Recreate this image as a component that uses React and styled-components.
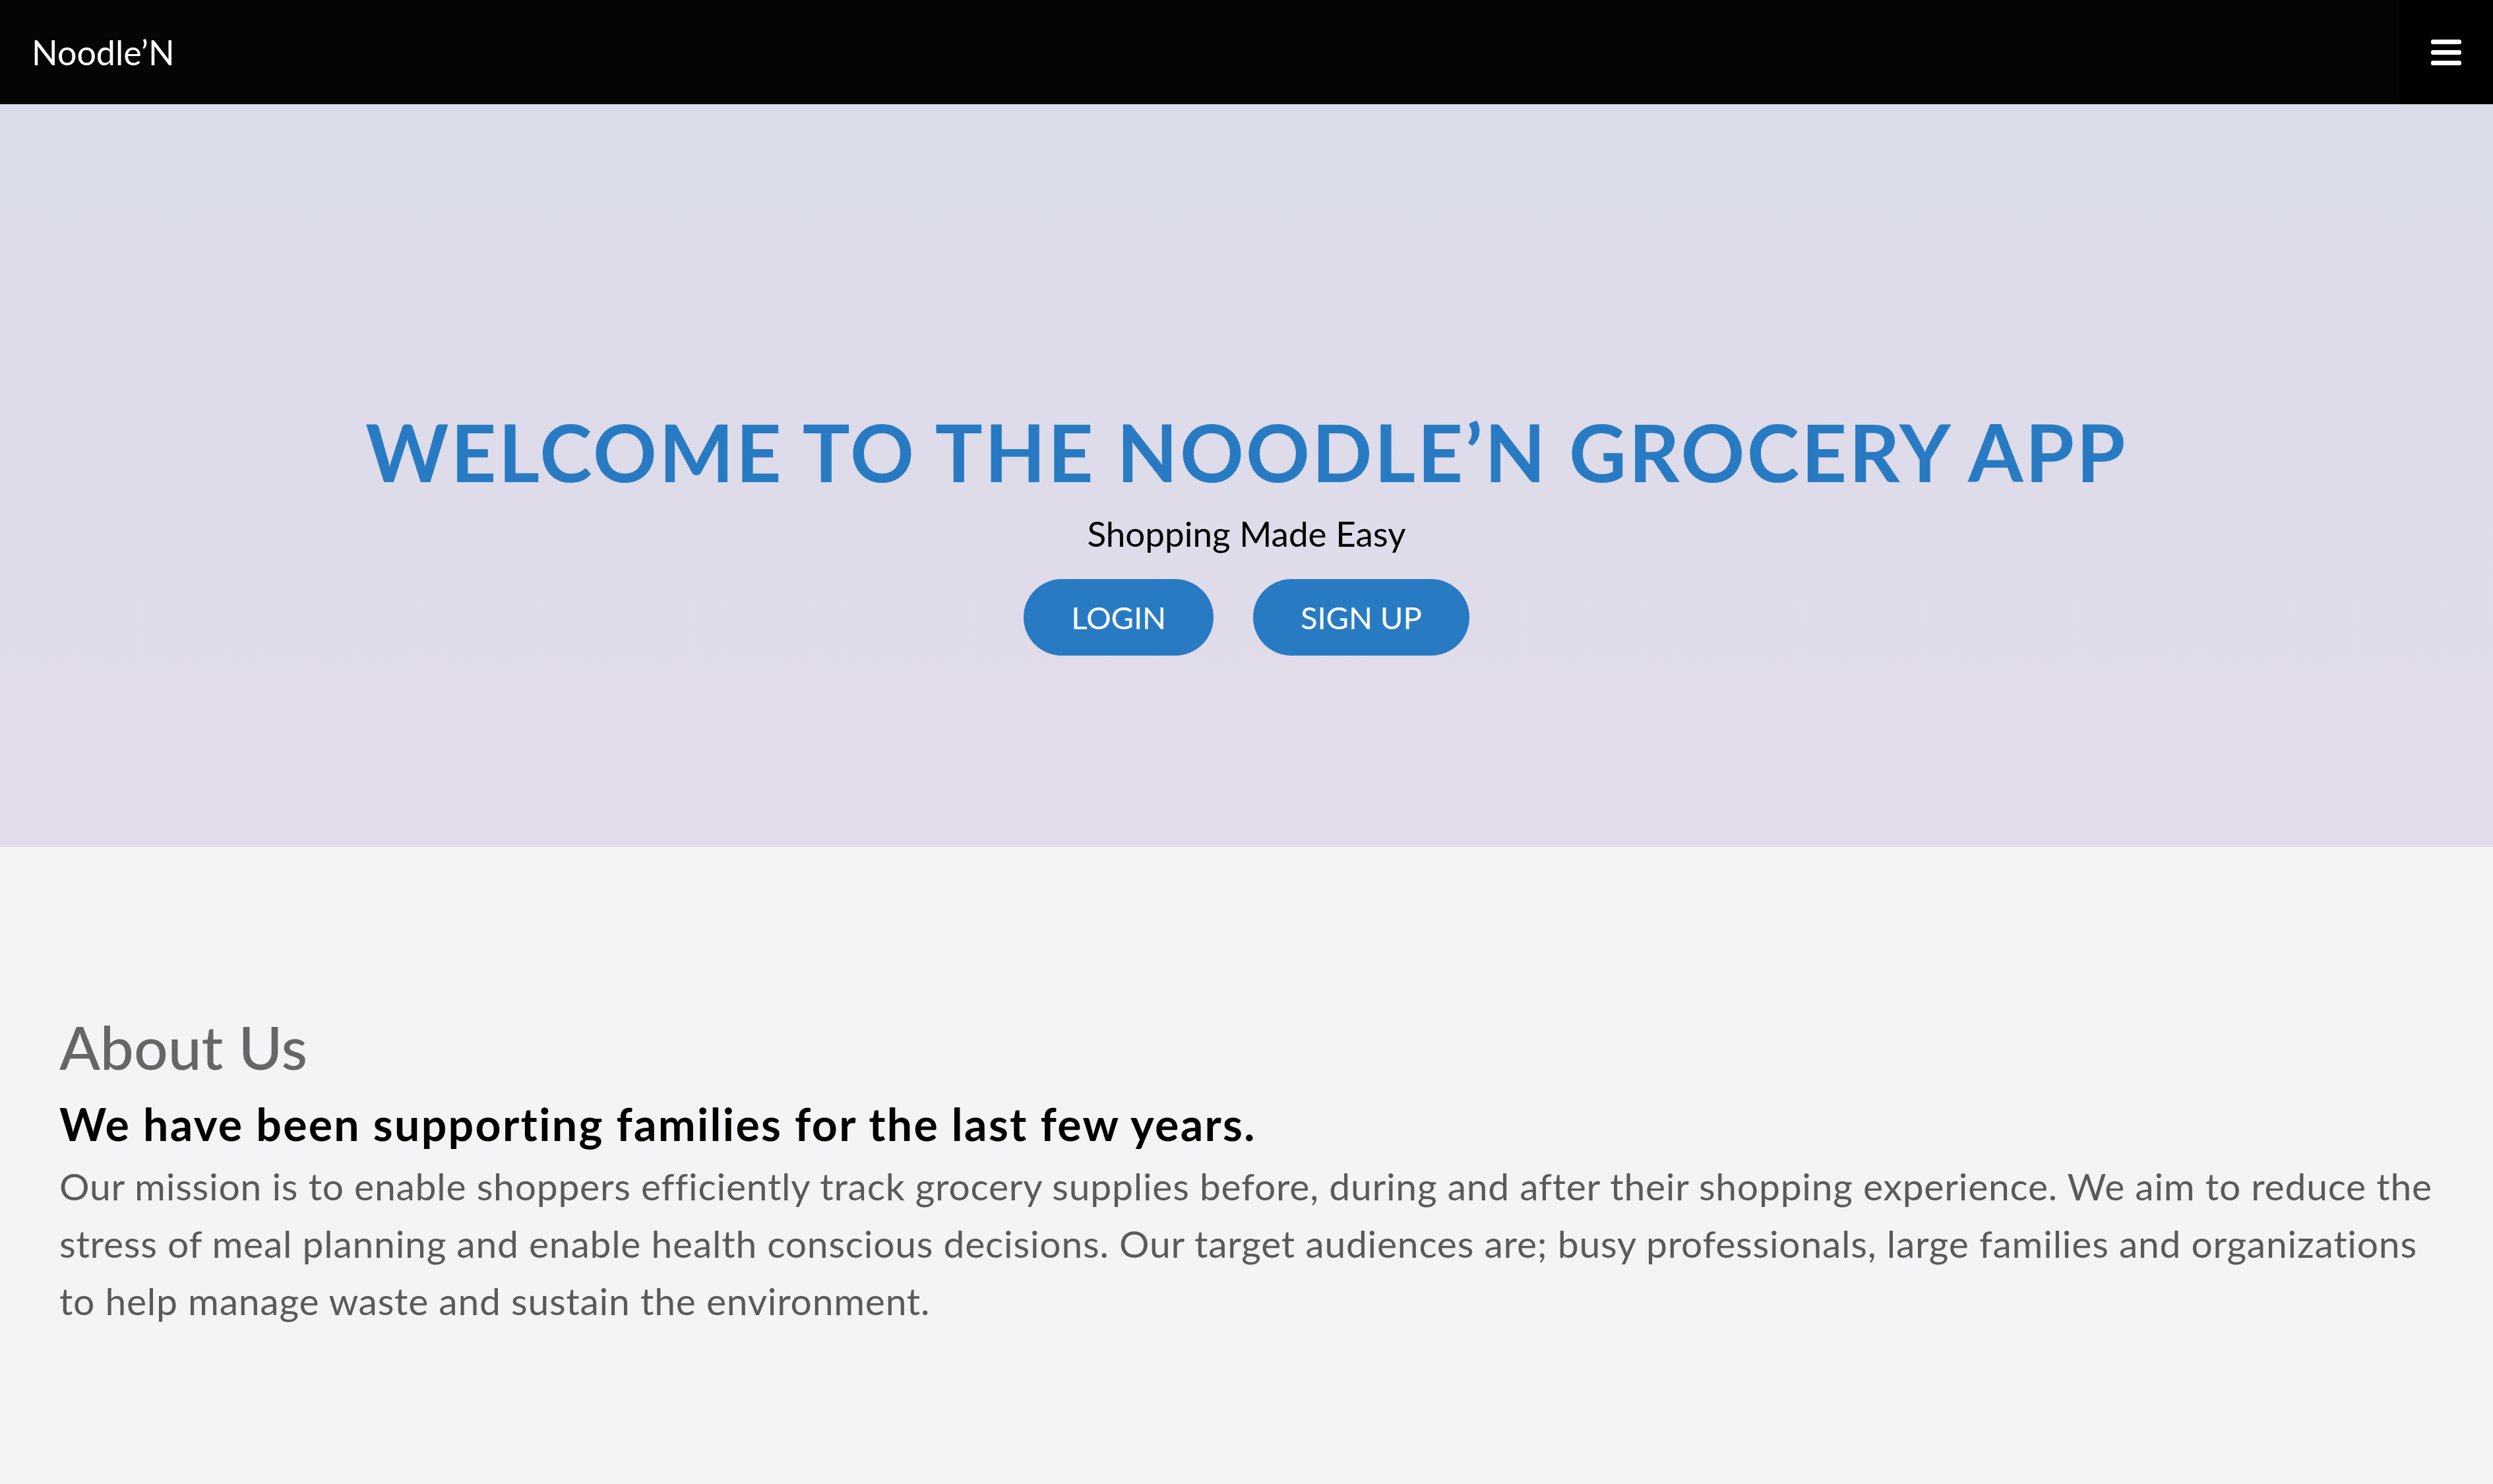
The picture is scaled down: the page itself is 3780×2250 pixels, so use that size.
import React from "react";
import styled, { createGlobalStyle } from "styled-components";

const GlobalStyle = createGlobalStyle`
  body {
    margin: 0;
    background-color: #f4f4f6;
    font-family: Lato, "Open Sans", sans-serif;
  }
`;

const App = () => {
  return (
    <>
      <GlobalStyle />
      <Navbar>
        <Brand>Noodle’N</Brand>
        <MenuToggle aria-label="menu">
          <Bar />
          <Bar />
          <Bar />
        </MenuToggle>
      </Navbar>

      <Hero>
        <Title>WELCOME TO THE NOODLE’N GROCERY APP</Title>
        <Subtitle>Shopping Made Easy</Subtitle>
        <ButtonRow>
          <PillButton>LOGIN</PillButton>
          <PillButton>SIGN UP</PillButton>
        </ButtonRow>
      </Hero>

      <About>
        <AboutTitle>About Us</AboutTitle>
        <AboutLead>We have been supporting families for the last few years.</AboutLead>
        <AboutText>
          Our mission is to enable shoppers efficiently track grocery supplies before, during and
          after their shopping experience. We aim to reduce the stress of meal planning and enable
          health conscious decisions. Our target audiences are; busy professionals, large families
          and organizations to help manage waste and sustain the environment.
        </AboutText>
      </About>
    </>
  );
};

const Navbar = styled.nav`
  display: flex;
  justify-content: space-between;
  align-items: center;
  height: 158px;
  background-color: #050505;
`;

const Brand = styled.a`
  padding-left: 48px;
  font-size: 52px;
  line-height: 1;
  color: #fff;
  text-decoration: none;
`;

const MenuToggle = styled.button`
  display: flex;
  flex-direction: column;
  justify-content: center;
  align-items: center;
  gap: 9px;
  width: 142px;
  height: 100%;
  padding: 0;
  border: none;
  background-color: #000;
  cursor: pointer;
`;

const Bar = styled.span`
  display: block;
  width: 46px;
  height: 7px;
  border-radius: 3px;
  background-color: #fff;
`;

const Hero = styled.section`
  display: flex;
  flex-direction: column;
  align-items: center;
  box-sizing: border-box;
  height: 1126px;
  padding-top: 455px;
  background: linear-gradient(180deg, #dadcea 0%, #e3dbea 100%);
`;

const Title = styled.h1`
  margin: 0;
  font-size: 120px;
  font-weight: 700;
  line-height: 1.2;
  letter-spacing: 3.2px;
  color: #287bc2;
`;

const Subtitle = styled.p`
  margin: 20px 0 0;
  font-size: 53px;
  line-height: 1.2;
  color: #000;
`;

const ButtonRow = styled.div`
  display: flex;
  gap: 60px;
  margin-top: 37px;
`;

const PillButton = styled.button`
  display: flex;
  align-items: center;
  justify-content: center;
  height: 116px;
  padding: 0 72px;
  border: none;
  border-radius: 58px;
  background-color: #287bc2;
  color: #fff;
  font-family: Lato, sans-serif;
  font-size: 47px;
  cursor: pointer;
`;

const About = styled.section`
  box-sizing: border-box;
  min-height: 966px;
  padding: 248px 90px 0;
`;

const AboutTitle = styled.h2`
  margin: 0;
  font-size: 91px;
  font-weight: 500;
  line-height: 1.2;
  color: #666;
`;

const AboutLead = styled.h3`
  margin: 22px 0 0;
  font-size: 68px;
  font-weight: 700;
  line-height: 1.2;
  letter-spacing: 2.3px;
  color: #000;
`;

const AboutText = styled.p`
  margin: 10px 0 0;
  font-size: 57px;
  line-height: 87px;
  letter-spacing: 0.75px;
  color: #5a5a5a;
`;

export default App;
